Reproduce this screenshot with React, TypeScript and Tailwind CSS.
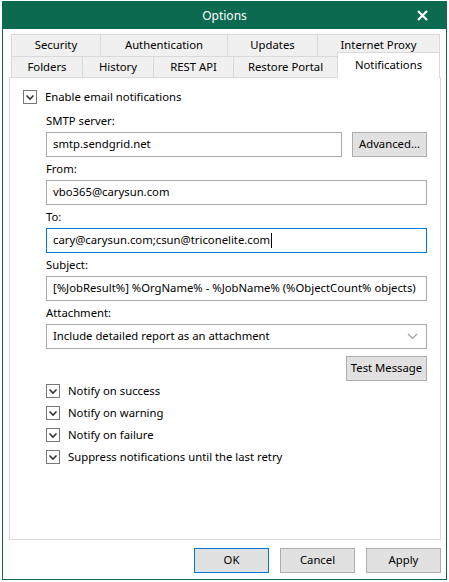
import React from "react";

const GREEN = "bg-[#0b6a50]";

const topTabs = [
  { label: "Security", w: "w-[89px]" },
  { label: "Authentication", w: "w-[127px]" },
  { label: "Updates", w: "w-[90px]" },
  { label: "Internet Proxy", w: "w-[123px]" },
];

const bottomTabs = [
  { label: "Folders", w: "w-[71px]" },
  { label: "History", w: "w-[71px]" },
  { label: "REST API", w: "w-[80px]" },
  { label: "Restore Portal", w: "w-[104px]" },
];

function Check() {
  return (
    <span className="flex h-[14px] w-[14px] shrink-0 items-center justify-center border border-[#777] bg-white">
      <svg width="10" height="10" viewBox="0 0 10 10">
        <polyline points="1.5,3.5 5,7 8.5,3.5" fill="none" stroke="#333" strokeWidth="1.6" />
      </svg>
    </span>
  );
}

function CheckRow({ label }: { label: string }) {
  return (
    <div className="flex h-[22px] items-center gap-[8px]">
      <Check />
      <span>{label}</span>
    </div>
  );
}

function Field({ label, value, focused, children }: { label: string; value?: string; focused?: boolean; children?: React.ReactNode }) {
  return (
    <div className="mb-[4px]">
      <div className="h-[16px] leading-[16px]">{label}</div>
      <div className="mt-[3px] flex gap-[10px]">
        <div
          className={`flex h-[25px] min-w-0 flex-1 items-center overflow-hidden whitespace-nowrap border px-[6px] ${
            focused ? "border-[#0078d7]" : "border-[#a9a9a9]"
          }`}
        >
          {value}
          {focused && <span className="ml-px inline-block h-[15px] w-px bg-black" />}
        </div>
        {children}
      </div>
    </div>
  );
}

function Button({ label, w, primary }: { label: string; w: string; primary?: boolean }) {
  return (
    <button
      className={`flex h-[25px] ${w} items-center justify-center border bg-[#e1e1e1] ${
        primary ? "border-[#0078d7]" : "border-[#adadad]"
      }`}
    >
      {label}
    </button>
  );
}

export default function App() {
  return (
    <div
      className="min-h-[582px] bg-white pl-[2px] pt-px text-[11.3px] text-black"
      style={{ fontFamily: '"Segoe UI", "Noto Sans", sans-serif' }}
    >
      <div className="flex h-[579px] w-[445px] flex-col border border-[#0b6a50] bg-white">
        <div className={`grid h-[27px] grid-cols-[1fr_auto_1fr] items-center ${GREEN} text-white`}>
          <span />
          <span className="text-[12px]">Options</span>
          <span className="flex justify-end pr-[18px]">
            <svg width="11" height="11" viewBox="0 0 11 11">
              <path d="M1 1 L10 10 M10 1 L1 10" stroke="white" strokeWidth="2.2" />
            </svg>
          </span>
        </div>

        <div className="flex flex-1 flex-col pl-[6px] pr-[5px] pt-[5px]">
          <div className="ml-[2px] flex h-[22px]">
            {topTabs.map((t, i) => (
              <div
                key={t.label}
                className={`flex ${t.w} items-center justify-center border-l border-t border-[#d9d9d9] bg-[#f0f0f0] ${
                  i === topTabs.length - 1 ? "border-r" : ""
                }`}
              >
                {t.label}
              </div>
            ))}
          </div>
          <div className="ml-[2px] flex h-[21px] items-end">
            {bottomTabs.map((t) => (
              <div
                key={t.label}
                className={`flex h-[21px] ${t.w} items-center justify-center border-l border-t border-[#d9d9d9] bg-[#f0f0f0]`}
              >
                {t.label}
              </div>
            ))}
            <div className="relative z-10 -mb-px flex h-[26px] w-[103px] items-start justify-center border-x border-t border-[#d9d9d9] bg-white pt-[4px]">
              Notifications
            </div>
          </div>

          <div className="flex h-[463px] flex-col border border-[#d9d9d9] bg-white pl-[13px] pr-[13px] pt-[11px]">
            <div className="flex h-[16px] items-center gap-[8px]">
              <Check />
              <span>Enable email notifications</span>
            </div>

            <div className="mt-[8px] pl-[23px]">
              <Field label="SMTP server:" value="smtp.sendgrid.net">
                <Button label="Advanced..." w="w-[75px]" />
              </Field>
              <Field label="From:" value="vbo365@carysun.com" />
              <Field label="To:" value="cary@carysun.com;csun@triconelite.com" focused />
              <Field label="Subject:" value="[%JobResult%] %OrgName% - %JobName% (%ObjectCount% objects)" />
              <div>
                <div className="h-[16px] leading-[16px]">Attachment:</div>
                <div className="mt-[3px] flex h-[25px] items-center justify-between border border-[#a9a9a9] pl-[6px] pr-[8px]">
                  <span>Include detailed report as an attachment</span>
                  <svg width="11" height="7" viewBox="0 0 11 7">
                    <polyline points="1,1 5.5,5.5 10,1" fill="none" stroke="#a0a0a0" strokeWidth="1.2" />
                  </svg>
                </div>
              </div>
              <div className="mt-[7px] flex justify-end">
                <Button label="Test Message" w="w-[81px]" />
              </div>
              <div className="mt-[-1px]">
                <CheckRow label="Notify on success" />
                <CheckRow label="Notify on warning" />
                <CheckRow label="Notify on failure" />
                <CheckRow label="Suppress notifications until the last retry" />
              </div>
            </div>
          </div>

          <div className="mt-[8px] flex justify-end gap-[11px]">
            <Button label="OK" w="w-[75px]" primary />
            <Button label="Cancel" w="w-[75px]" />
            <Button label="Apply" w="w-[75px]" />
          </div>
        </div>
      </div>
    </div>
  );
}
